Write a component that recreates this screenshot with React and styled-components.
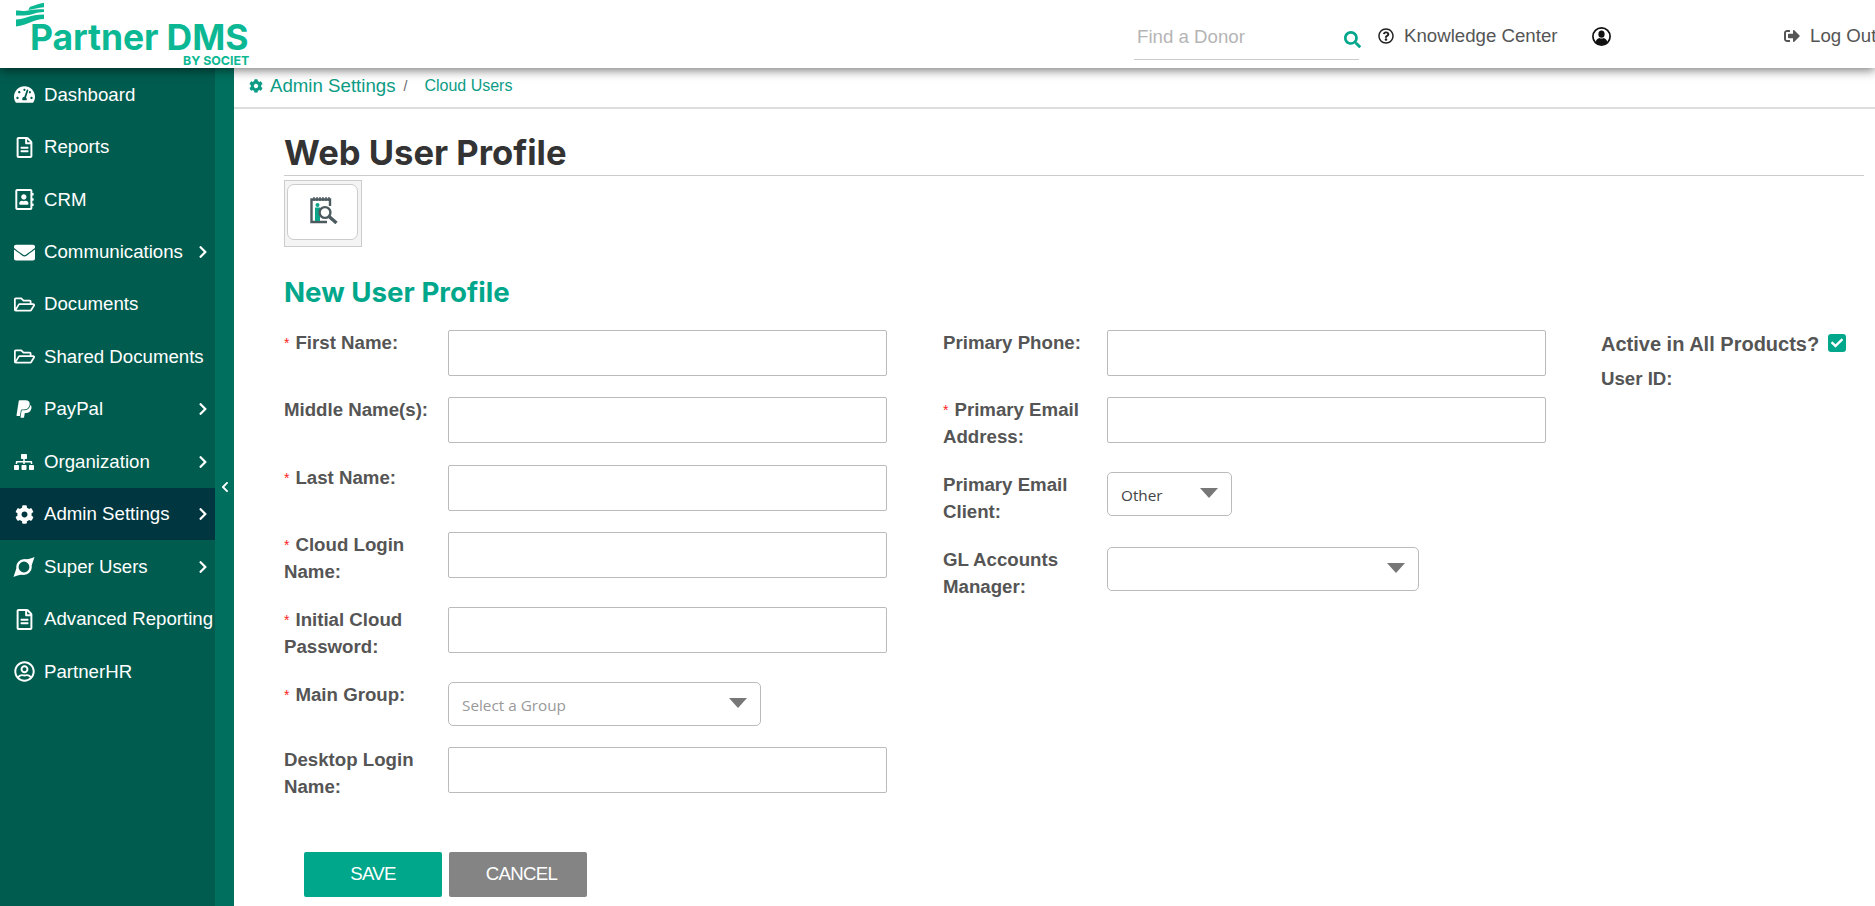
import React from 'react'
import styled, {createGlobalStyle} from 'styled-components'
import {
  FaTachometerAlt,
  FaRegFileAlt,
  FaRegAddressBook,
  FaEnvelope,
  FaRegFolderOpen,
  FaPaypal,
  FaSitemap,
  FaCog,
  FaRegUserCircle,
  FaChevronRight,
  FaChevronLeft,
  FaSearch,
  FaRegQuestionCircle,
  FaSignOutAlt,
  FaCheck,
} from 'react-icons/fa'

const GlobalStyle = createGlobalStyle`
  html, body {
    margin: 0;
    padding: 0;
    height: 100%;
    overflow: hidden;
    background: #fff;
    font-family: "Liberation Sans", Arial, sans-serif;
  }
  * { box-sizing: border-box; }
`

const SuperIcon = () => (
  <svg width="22" height="22" viewBox="0 0 22 22" fill="none">
    <circle cx="11" cy="11" r="6.6" stroke="#fff" strokeWidth="2.4" />
    <path d="M9.5 3.2 C14 3.4 17.5 3 21.5 1 C20.5 4.5 19.4 6.8 18.6 10 L16 6 Z" fill="#fff" />
    <path d="M12.5 18.8 C8 18.6 4.5 19 0.5 21 C1.5 17.5 2.6 15.2 3.4 12 L6 16 Z" fill="#fff" />
  </svg>
)

const UserRing = () => (
  <svg width="19" height="19" viewBox="0 0 19 19" fill="none">
    <circle cx="9.5" cy="9.5" r="8.6" stroke="#111" strokeWidth="1.7" />
    <ellipse cx="9.5" cy="7.2" rx="3.1" ry="3.6" fill="#111" />
    <path d="M3.6 15.4 C4 12.6 6 11.2 7.4 11 C8.6 11.8 10.4 11.8 11.6 11 C13 11.2 15 12.6 15.4 15.4 C13.8 17 11.8 17.8 9.5 17.8 C7.2 17.8 5.2 17 3.6 15.4 Z" fill="#111" />
  </svg>
)

const navItems = [
  {label: 'Dashboard', icon: <FaTachometerAlt size={21} />},
  {label: 'Reports', icon: <FaRegFileAlt size={21} />},
  {label: 'CRM', icon: <FaRegAddressBook size={21} />},
  {label: 'Communications', icon: <FaEnvelope size={21} />, more: true},
  {label: 'Documents', icon: <FaRegFolderOpen size={21} />},
  {label: 'Shared Documents', icon: <FaRegFolderOpen size={21} />},
  {label: 'PayPal', icon: <FaPaypal size={20} />, more: true},
  {label: 'Organization', icon: <FaSitemap size={20} />, more: true},
  {label: 'Admin Settings', icon: <FaCog size={19} />, more: true, active: true},
  {label: 'Super Users', icon: <SuperIcon />, more: true},
  {label: 'Advanced Reporting', icon: <FaRegFileAlt size={21} />},
  {label: 'PartnerHR', icon: <FaRegUserCircle size={21} />},
]

const LogoMark = () => (
  <svg width="28" height="25" viewBox="0 0 28 25" fill="#0cb893">
    <path d="M14 4.7 C19 4 23 1 28 0.7 V5.3 C22 5.5 18 7.2 12.3 8 Z" />
    <path d="M0 8.5 C5 8.5 8 9.5 12 8.6 C18 7.2 22 7.5 28 7.3 V10 C20 10 15 13.5 8 13.5 H0 Z" />
    <path d="M0 17.5 C8 17.5 14 12.5 28 12.5 V17 C18 17 12 23 0 24.5 Z" />
  </svg>
)

const ReportIcon = () => (
  <svg width="28" height="27" viewBox="0 0 28 27" fill="none">
    <path d="M20 9V2.5H1.5V25H17" stroke="#4d5b61" strokeWidth="2.4" />
    <path d="M4 0v4M7 0v4M10 0v4M13 0v4M16 0v4M19 0v4" stroke="#4d5b61" strokeWidth="1.4" />
    <path d="M5 10.5h5v13.5H5z" fill="#0ca58a" />
    <circle cx="7.5" cy="8" r="2" fill="#0ca58a" />
    <circle cx="15" cy="15.5" r="5.4" stroke="#4d5b61" strokeWidth="2.4" />
    <path d="M19 19.5l7.5 6.5" stroke="#4d5b61" strokeWidth="3.4" />
  </svg>
)

const Field = ({label, required, two, select, width, value, placeholder}) => (
  <Row $two={two}>
    <Label>
      {required && <Star>*</Star>}
      {label}
    </Label>
    {select ? (
      <SelectBox $width={width}>
        <SelectText $muted={!!placeholder}>{value || placeholder}</SelectText>
        <Caret />
      </SelectBox>
    ) : (
      <TextInput />
    )}
  </Row>
)

export default function App() {
  return (
    <>
      <GlobalStyle />
      <Page>
        <Header>
          <Logo>
            <LogoMark />
            <LogoName>Partner DMS</LogoName>
            <LogoBy>BY SOCIET</LogoBy>
          </Logo>
          <Search>
            <SearchInput placeholder="Find a Donor" aria-label="Find a Donor" />
            <SearchGlyph>
              <FaSearch size={17} />
            </SearchGlyph>
          </Search>
          <HeaderLink $width={214}>
            <FaRegQuestionCircle size={16} />
            Knowledge Center
          </HeaderLink>
          <HeaderLink $width={192}>
            <UserRing />
          </HeaderLink>
          <HeaderLink $width={120}>
            <FaSignOutAlt size={16} color="#555" />
            Log Out
          </HeaderLink>
        </Header>
        <Body>
          <Sidebar>
            <NavList>
              {navItems.map(item => (
                <NavItem key={item.label} $active={item.active}>
                  <NavIcon>{item.icon}</NavIcon>
                  <NavLabel>{item.label}</NavLabel>
                  {item.more && (
                    <NavChevron>
                      <FaChevronRight size={14} />
                    </NavChevron>
                  )}
                </NavItem>
              ))}
            </NavList>
            <Strip>
              <FaChevronLeft size={12} />
            </Strip>
          </Sidebar>
          <Main>
            <Breadcrumb>
              <FaCog size={14} />
              <CrumbRoot>Admin Settings</CrumbRoot>
              <CrumbSep>/</CrumbSep>
              <CrumbLeaf>Cloud Users</CrumbLeaf>
            </Breadcrumb>
            <Content>
              <Title>Web User Profile</Title>
              <ToolBox>
                <ToolButton aria-label="Profile lookup">
                  <ReportIcon />
                </ToolButton>
              </ToolBox>
              <SectionTitle>New User Profile</SectionTitle>
              <FormGrid>
                <Column $gap={21.3}>
                  <Field label="First Name:" required />
                  <Field label="Middle Name(s):" />
                  <Field label="Last Name:" required />
                  <Field label={<>Cloud Login<br />Name:</>} required two />
                  <Field label={<>Initial Cloud<br />Password:</>} required two />
                  <Field label="Main Group:" required select width={313} placeholder="Select a Group" />
                  <Field label={<>Desktop Login<br />Name:</>} two />
                </Column>
                <Column $gap={21} $left={56}>
                  <Field label="Primary Phone:" />
                  <Field label={<>Primary Email<br />Address:</>} required two />
                  <Field label={<>Primary Email<br />Client:</>} two select width={125} value="Other" />
                  <Field label={<>GL Accounts<br />Manager:</>} two select width={312} />
                </Column>
                <SideInfo>
                  <ActiveLine>
                    Active in All Products?
                    <CheckBox>
                      <FaCheck size={12} />
                    </CheckBox>
                  </ActiveLine>
                  <Label as="div">User ID:</Label>
                </SideInfo>
              </FormGrid>
              <Actions>
                <ActionButton $bg="#00a78b">SAVE</ActionButton>
                <ActionButton $bg="#848484" $shift={7}>CANCEL</ActionButton>
              </Actions>
            </Content>
          </Main>
        </Body>
      </Page>
    </>
  )
}

const Page = styled.div`
  width: 1875px;
  height: 906px;
  overflow: hidden;
  display: flex;
  flex-direction: column;
`

const Header = styled.header`
  position: relative;
  z-index: 2;
  flex: none;
  height: 68px;
  display: flex;
  align-items: center;
  background: #fff;
  box-shadow: 0 2px 10px rgba(0, 0, 0, 0.55);
  overflow: hidden;
`

const Logo = styled.div`
  flex: none;
  width: 1134px;
  height: 68px;
  padding: 2px 0 0 16px;
  display: flex;
  flex-direction: column;
  align-items: flex-start;
`

const LogoName = styled.div`
  margin: -4px 0 0 14px;
  font-family: Inter, sans-serif;
  font-weight: 700;
  font-size: 35.5px;
  line-height: 30px;
  letter-spacing: -0.1px;
  color: #0cb893;
  white-space: nowrap;
`

const LogoBy = styled.div`
  margin: 3px 0 0 167px;
  font-family: Inter, sans-serif;
  font-weight: 700;
  font-size: 12.4px;
  line-height: 10px;
  color: #0cb893;
  white-space: nowrap;
`

const Search = styled.div`
  flex: none;
  align-self: flex-start;
  width: 225px;
  height: 60px;
  margin-right: 19px;
  display: flex;
  align-items: center;
  border-bottom: 1px solid #ccc;
  position: relative;
`

const SearchInput = styled.input`
  width: 100%;
  height: 100%;
  padding: 14px 3px 0;
  border: 0;
  outline: 0;
  background: transparent;
  font: 18.66px "Liberation Sans", Arial, sans-serif;
  &::placeholder {
    color: #b5b5b5;
    opacity: 1;
  }
`

const SearchGlyph = styled.span`
  position: absolute;
  right: -2px;
  top: 31px;
  display: flex;
  color: #00a78b;
`

const HeaderLink = styled.div`
  flex: none;
  width: ${p => p.$width}px;
  display: flex;
  align-items: center;
  gap: 10px;
  padding-top: 4px;
  font-size: 18.66px;
  color: #555;
  white-space: nowrap;
  & > svg {
    flex: none;
    color: #222;
  }
`

const Body = styled.div`
  flex: 1;
  min-height: 0;
  display: flex;
`

const Sidebar = styled.aside`
  flex: none;
  width: 234px;
  display: flex;
  background: #005c4f;
`

const NavList = styled.nav`
  width: 215px;
  display: flex;
  flex-direction: column;
`

const NavItem = styled.div`
  height: 52.45px;
  display: flex;
  align-items: center;
  padding: 1px 0 0 13px;
  background: ${p => (p.$active ? '#00363f' : 'transparent')};
  color: #fff;
`

const NavIcon = styled.span`
  flex: none;
  width: 31px;
  display: flex;
  justify-content: center;
  padding-right: 9px;
`

const NavLabel = styled.span`
  font-size: 18.66px;
  white-space: nowrap;
`

const NavChevron = styled.span`
  margin-left: auto;
  margin-right: 5px;
  display: flex;
`

const Strip = styled.div`
  flex: none;
  width: 19px;
  padding-top: 413px;
  display: flex;
  justify-content: center;
  background: #006f5d;
  color: #fff;
`

const Main = styled.main`
  flex: 1;
  min-width: 0;
  display: flex;
  flex-direction: column;
`

const Breadcrumb = styled.div`
  height: 41px;
  flex: none;
  padding: 0 0 4px 15px;
  display: flex;
  align-items: center;
  border-bottom: 2px solid #ddd;
  color: #0d9c85;
`

const CrumbRoot = styled.span`
  margin-left: 7px;
  font-size: 18.66px;
`

const CrumbSep = styled.span`
  margin: 0 17px 0 8px;
  font-size: 14px;
  color: #666;
`

const CrumbLeaf = styled.span`
  font-size: 16px;
`

const Content = styled.div`
  padding: 22px 11px 0 50px;
`

const Title = styled.h1`
  margin: 0;
  height: 45px;
  border-bottom: 1px solid #ccc;
  font-family: Inter, sans-serif;
  font-weight: 700;
  font-size: 34.6px;
  line-height: 42px;
  color: #333;
  white-space: nowrap;
`

const ToolBox = styled.div`
  width: 78px;
  height: 67px;
  margin-top: 4px;
  padding: 3px 4px 5px 2px;
  background: #f4f4f4;
  border: 1px solid #ccc;
`

const ToolButton = styled.button`
  display: flex;
  align-items: center;
  justify-content: center;
  width: 71px;
  height: 56px;
  padding: 0 0 4px 2px;
  background: #fff;
  border: 1px solid #ccc;
  border-radius: 7px;
`

const SectionTitle = styled.h2`
  margin: 29px 0 0 0;
  height: 54px;
  font-family: Inter, sans-serif;
  font-weight: 700;
  font-size: 27.7px;
  line-height: 33px;
  color: #00a78b;
  white-space: nowrap;
`

const FormGrid = styled.div`
  display: flex;
  align-items: flex-start;
`

const Column = styled.div`
  flex: none;
  display: flex;
  flex-direction: column;
  gap: ${p => p.$gap}px;
  margin-left: ${p => p.$left || 0}px;
`

const Row = styled.div`
  display: flex;
  align-items: flex-start;
  min-height: ${p => (p.$two ? 54 : 0)}px;
`

const Label = styled.label`
  flex: none;
  width: 164px;
  margin-top: -1px;
  margin-bottom: 1px;
  font-size: 18.66px;
  font-weight: 700;
  line-height: 27px;
  color: #555;
  white-space: nowrap;
`

const Star = styled.span`
  margin-right: 6px;
  font-size: 14px;
  font-weight: 400;
  line-height: 1;
  color: #f22;
  vertical-align: 1px;
`

const TextInput = styled.input`
  width: 439px;
  height: 46px;
  border: 1px solid #bbb;
  border-radius: 2px;
  outline: 0;
`

const SelectBox = styled.div`
  width: ${p => p.$width}px;
  height: 44px;
  margin-bottom: -1px;
  padding: 0 13px;
  display: flex;
  align-items: center;
  justify-content: space-between;
  border: 1px solid #bbb;
  border-radius: 5px;
`

const SelectText = styled.span`
  padding-top: 2px;
  font-family: "Open Sans", sans-serif;
  font-size: 15.3px;
  color: ${p => (p.$muted ? '#999' : '#444')};
`

const Caret = styled.span`
  margin-left: auto;
  margin-bottom: 3px;
  width: 0;
  height: 0;
  border-left: 9.5px solid transparent;
  border-right: 9.5px solid transparent;
  border-top: 10px solid #777;
`

const SideInfo = styled.div`
  flex: none;
  margin-left: 55px;
  padding-top: 1px;
  display: flex;
  flex-direction: column;
  gap: 8px;
`

const ActiveLine = styled.div`
  display: flex;
  align-items: center;
  gap: 9px;
  font-size: 20px;
  font-weight: 700;
  line-height: 27px;
  color: #555;
  white-space: nowrap;
`

const CheckBox = styled.span`
  width: 18px;
  height: 18px;
  margin-top: -3px;
  display: flex;
  align-items: center;
  justify-content: center;
  border-radius: 3px;
  background: #00a78b;
  color: #fff;
`

const Actions = styled.div`
  margin: 51px 0 0 20px;
  display: flex;
  gap: 7px;
`

const ActionButton = styled.button`
  width: 138px;
  height: 45px;
  padding: 0 0 0 ${p => p.$shift || 0}px;
  border: 0;
  border-radius: 2px;
  background: ${p => p.$bg};
  color: #fff;
  font: 18.66px "Liberation Sans", Arial, sans-serif;
  letter-spacing: -0.7px;
`
